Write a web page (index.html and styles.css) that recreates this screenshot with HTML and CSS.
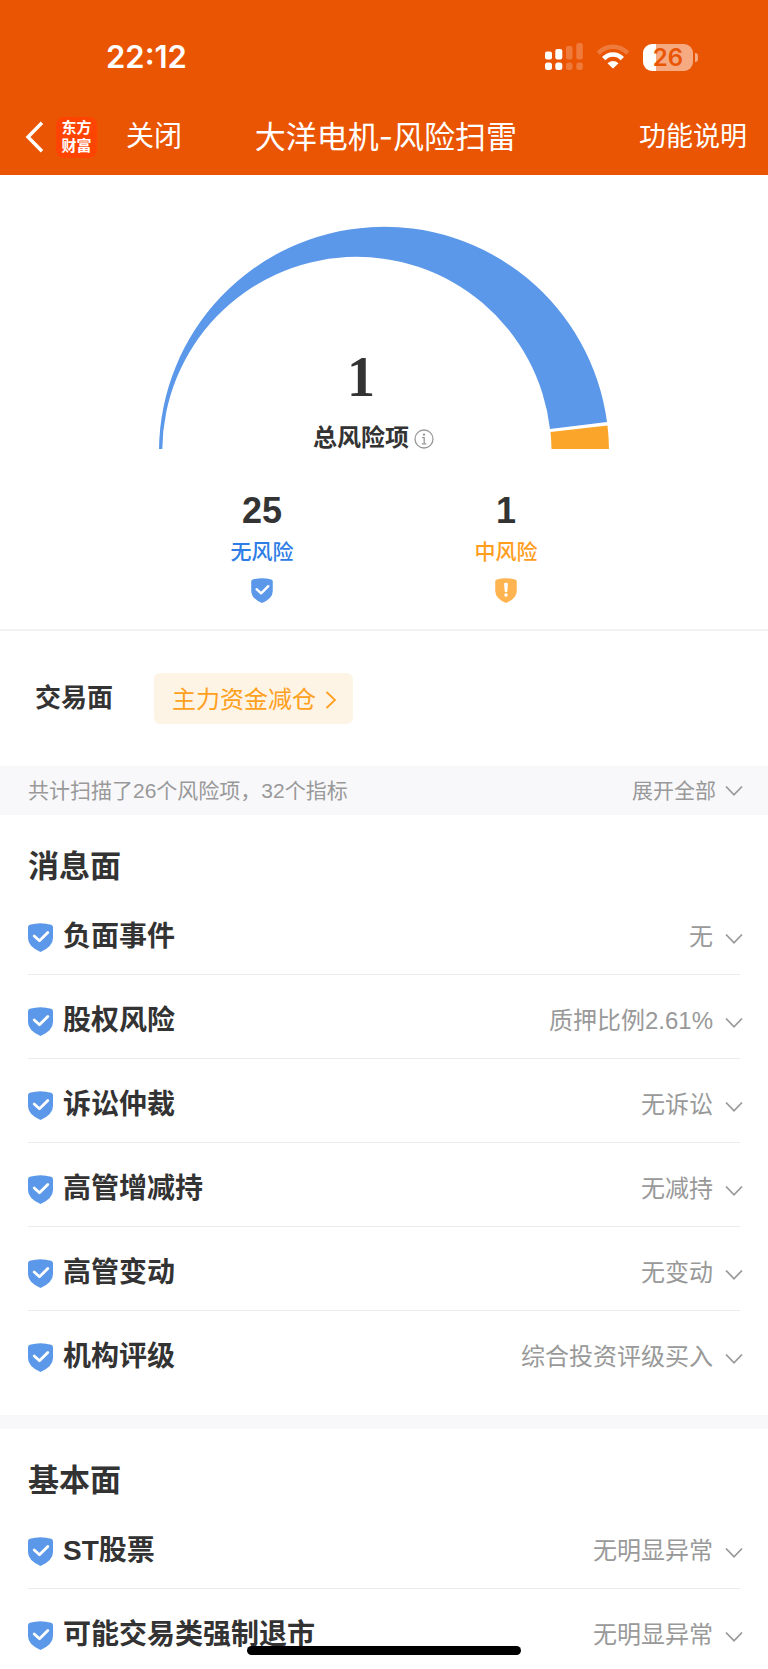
FILE: index.html
```html
<!DOCTYPE html>
<html lang="zh-CN">
<head>
<meta charset="utf-8">
<meta name="viewport" content="width=device-width, initial-scale=1">
<title>大洋电机-风险扫雷</title>
<link rel="stylesheet" href="styles.css">
</head>
<body>
<svg class="defs" width="0" height="0" aria-hidden="true">
  <symbol id="shield-ok" viewBox="0 0 25 29">
    <path fill="#5b98e9" d="M1.800 1.800Q12.500-1.500 23.200 1.800Q25 2.400 25 4.200V15Q25 23.500 12.500 29Q0 23.500 0 15V4.200Q0 2.400 1.800 1.800Z"/>
    <path fill="none" stroke="#fff" stroke-width="2.800" stroke-linecap="round" stroke-linejoin="round" d="M6.200 13L11.500 17.800L19.800 9.500"/>
  </symbol>
  <symbol id="shield-warn" viewBox="0 0 25 29">
    <path fill="#ffb452" d="M1.800 1.800Q12.500-1.500 23.200 1.800Q25 2.400 25 4.200V15Q25 23.500 12.500 29Q0 23.500 0 15V4.200Q0 2.400 1.800 1.800Z"/>
    <path fill="#fff" d="M10.300 7Q10.300 5.500 12.500 5.500T14.700 7L14 15.500Q13.800 16.500 12.500 16.500T11 15.500Z"/>
    <circle cx="12.500" cy="19.800" r="2" fill="#fff"/>
  </symbol>
  <symbol id="chev" viewBox="0 0 18 12">
    <path fill="none" stroke="#999" stroke-width="1.800" d="M1 1.500L9 9.800L17 1.500"/>
  </symbol>
</svg>

<header class="top">
  <div class="status">
    <time class="clock">22:12</time>
    <div class="status-icons">
      <svg width="38" height="28" viewBox="0 0 38 28" fill="#fff" aria-label="信号">
        <rect x="0" y="8.500" width="7" height="8" rx="2"/><rect x="10.300" y="6" width="7" height="10.500" rx="2"/>
        <rect x="0" y="19.500" width="7" height="7.500" rx="2.500"/><rect x="10.300" y="19.500" width="7" height="7.500" rx="2.500"/>
        <g opacity=".22"><rect x="21" y="3" width="6.500" height="13.500" rx="2"/><rect x="31.300" y="0" width="6.500" height="16.500" rx="2"/>
        <rect x="21" y="19.500" width="6.500" height="7.500" rx="2.500"/><rect x="31.300" y="19.500" width="6.500" height="7.500" rx="2.500"/></g>
      </svg>
      <svg width="34" height="28" viewBox="0 0 34 28" aria-label="无线网络">
        <path fill="none" stroke="#fff" stroke-opacity=".22" stroke-width="4.600" d="M2.200 10.200Q8.500 3.800 17 3.800T31.800 10.200"/>
        <path fill="none" stroke="#fff" stroke-width="4.600" d="M7.700 15.600Q11.500 11.500 17 11.500T26.300 15.600"/>
        <path fill="#fff" d="M11.500 20.200Q17 15.600 22.500 20.200L17.700 25Q17 25.500 16.300 25Z"/>
      </svg>
      <span class="battery"><span class="battery-body">26</span><span class="battery-nub"></span></span>
    </div>
  </div>
  <nav class="nav">
    <div class="nav-left">
      <button class="back" type="button" aria-label="返回">
        <svg width="19" height="32" viewBox="0 0 19 32"><path fill="none" stroke="#fff" stroke-width="3.400" d="M17 1.700L3 16L17 30.300"/></svg>
      </button>
      <span class="logo">东方<br>财富</span>
      <button class="nav-link" type="button">关闭</button>
    </div>
    <h1 class="title">大洋电机-风险扫雷</h1>
    <a class="nav-link nav-help" href="#help">功能说明</a>
  </nav>
</header>

<main>
  <section class="summary">
    <div class="gauge">
      <svg class="gauge-arc" width="450" height="223" viewBox="0 0 450 223" aria-hidden="true">
        <path fill="#5b98e9" d="M0 223A225 225 0 0 1 448 196L391 203A194.500 194.500 0 0 0 3.300 223Z"/>
        <path fill="#fba52b" d="M448.500 199.500A225 225 0 0 1 450 223H392.500A194.500 194.500 0 0 0 391.500 206Z"/>
      </svg>
      <div class="gauge-text">
        <strong class="total">1</strong>
        <div class="total-label">总风险项
          <svg class="info" width="20" height="20" viewBox="0 0 20 20" aria-hidden="true">
            <circle cx="10" cy="10" r="9" fill="none" stroke="#999" stroke-width="1.300"/>
            <circle cx="10" cy="5.600" r="1.200" fill="#999"/>
            <path fill="none" stroke="#999" stroke-width="1.300" d="M8 8.700H10.200V14.700M7.800 14.900H12.400"/>
          </svg>
        </div>
      </div>
    </div>
    <div class="stats">
      <div class="stat">
        <strong class="stat-num">25</strong>
        <span class="stat-label safe">无风险</span>
        <svg width="22" height="25"><use href="#shield-ok"/></svg>
      </div>
      <div class="stat">
        <strong class="stat-num">1</strong>
        <span class="stat-label warn">中风险</span>
        <svg width="22" height="25"><use href="#shield-warn"/></svg>
      </div>
    </div>
  </section>

  <section class="trade">
    <h2 class="trade-title">交易面</h2>
    <a class="tag" href="#fund">主力资金减仓
      <svg width="12" height="20" viewBox="0 0 12 20"><path fill="none" stroke="#ffa020" stroke-width="1.800" d="M1.500 2L10 10L1.500 18"/></svg>
    </a>
  </section>

  <div class="scan">
    <span>共计扫描了26个风险项，32个指标</span>
    <button class="expand" type="button">展开全部<svg width="18" height="12"><use href="#chev"/></svg></button>
  </div>

  <section class="group">
    <h2 class="group-title">消息面</h2>
    <ul class="list">
      <li><button class="row" type="button"><svg class="shield" width="25" height="29"><use href="#shield-ok"/></svg><span class="name">负面事件</span><span class="value">无</span><svg class="chev" width="18" height="12"><use href="#chev"/></svg></button></li>
      <li><button class="row" type="button"><svg class="shield" width="25" height="29"><use href="#shield-ok"/></svg><span class="name">股权风险</span><span class="value">质押比例2.61%</span><svg class="chev" width="18" height="12"><use href="#chev"/></svg></button></li>
      <li><button class="row" type="button"><svg class="shield" width="25" height="29"><use href="#shield-ok"/></svg><span class="name">诉讼仲裁</span><span class="value">无诉讼</span><svg class="chev" width="18" height="12"><use href="#chev"/></svg></button></li>
      <li><button class="row" type="button"><svg class="shield" width="25" height="29"><use href="#shield-ok"/></svg><span class="name">高管增减持</span><span class="value">无减持</span><svg class="chev" width="18" height="12"><use href="#chev"/></svg></button></li>
      <li><button class="row" type="button"><svg class="shield" width="25" height="29"><use href="#shield-ok"/></svg><span class="name">高管变动</span><span class="value">无变动</span><svg class="chev" width="18" height="12"><use href="#chev"/></svg></button></li>
      <li><button class="row" type="button"><svg class="shield" width="25" height="29"><use href="#shield-ok"/></svg><span class="name">机构评级</span><span class="value">综合投资评级买入</span><svg class="chev" width="18" height="12"><use href="#chev"/></svg></button></li>
    </ul>
  </section>

  <section class="group">
    <h2 class="group-title">基本面</h2>
    <ul class="list">
      <li><button class="row" type="button"><svg class="shield" width="25" height="29"><use href="#shield-ok"/></svg><span class="name">ST股票</span><span class="value">无明显异常</span><svg class="chev" width="18" height="12"><use href="#chev"/></svg></button></li>
      <li><button class="row" type="button"><svg class="shield" width="25" height="29"><use href="#shield-ok"/></svg><span class="name">可能交易类强制退市</span><span class="value">无明显异常</span><svg class="chev" width="18" height="12"><use href="#chev"/></svg></button></li>
    </ul>
  </section>
</main>
<div class="home-bar"></div>
</body>
</html>
```
FILE: styles.css
```css
* {
  box-sizing: border-box;
}

body {
  margin: 0;
  background: #fff;
  color: #333;
  font-family: "Liberation Sans", "Noto Sans CJK SC", sans-serif;
}

h1, h2, ul {
  margin: 0;
  padding: 0;
}

button {
  padding: 0;
  border: 0;
  background: none;
  color: inherit;
  font: inherit;
  cursor: pointer;
}

a {
  color: inherit;
  text-decoration: none;
}

svg {
  display: block;
  flex: none;
}

.defs {
  position: absolute;
}

/* Header */
.top {
  background: #ea5504;
  color: #fff;
}

.status {
  display: flex;
  justify-content: space-between;
  align-items: center;
  height: 99px;
  padding: 15px 70px 0 106px;
}

.clock {
  font: 600 31px/40px Inter, sans-serif;
}

.status-icons {
  display: flex;
  align-items: center;
  gap: 13px;
}

.battery {
  display: flex;
  align-items: center;
  gap: 2px;
}

.battery-body {
  width: 50px;
  height: 27px;
  border-radius: 9px;
  background: linear-gradient(90deg, #fff 26%, #f5aa82 26%);
  color: #ea5504;
  font: 600 24px/27px Inter, sans-serif;
  text-align: center;
}

.battery-nub {
  width: 3px;
  height: 9px;
  border-radius: 0 4px 4px 0;
  background: #f5aa82;
}

.nav {
  display: grid;
  grid-template-columns: 1fr auto 1fr;
  align-items: center;
  height: 76px;
  padding: 0 21px 0 25px;
}

.nav-left {
  display: flex;
  align-items: center;
}

.logo {
  width: 41px;
  height: 41px;
  margin: 0 29px 0 12px;
  padding-top: 1px;
  border-radius: 8px;
  background: #ff4402;
  font: 700 15px/18px "Noto Sans CJK SC", sans-serif;
  text-align: center;
}

.nav-link {
  font-size: 28px;
  line-height: 40px;
}

.nav-help {
  justify-self: end;
  font-size: 27px;
}

.title {
  font-family: Inter, "Noto Sans CJK SC", sans-serif;
  font-size: 31px;
  font-weight: 400;
  line-height: 40px;
}

/* Gauge */
.summary {
  padding: 51px 0 26px;
  border-bottom: 2px solid #f2f2f2;
}

.gauge {
  display: grid;
  justify-content: center;
}

.gauge-arc,
.gauge-text {
  grid-area: 1 / 1;
}

.gauge-text {
  display: flex;
  flex-direction: column;
  align-items: center;
  align-self: end;
  padding-right: 46px;
}

.total {
  font: 700 56px/60px "Liberation Serif", serif;
}

.total-label {
  position: relative;
  margin-top: 20px;
  font-size: 24px;
  font-weight: 700;
  line-height: 22px;
}

.info {
  position: absolute;
  top: 50%;
  left: 100%;
  margin: -9px 0 0 5px;
}

.stats {
  display: grid;
  grid-template-columns: 244px 244px;
  justify-content: center;
  padding-top: 40px;
}

.stat {
  display: flex;
  flex-direction: column;
  align-items: center;
}

.stat-num {
  font-size: 36px;
  line-height: 44px;
}

.stat-label {
  margin: 3px 0 10px;
  font-size: 21px;
  font-weight: 500;
  line-height: 32px;
}

.safe {
  color: #2e7de6;
}

.warn {
  color: #ff9d1c;
}

/* Trade tags */
.trade {
  display: flex;
  align-items: center;
  gap: 41px;
  padding: 42px 35px;
}

.trade-title {
  padding-bottom: 2px;
  font-size: 26px;
  line-height: 40px;
}

.tag {
  display: flex;
  align-items: center;
  gap: 9px;
  height: 51px;
  padding: 2px 16px 0 18px;
  border-radius: 6px;
  background: #fef4e6;
  color: #ffa020;
  font-size: 24px;
  line-height: 32px;
}

.scan {
  display: flex;
  justify-content: space-between;
  align-items: center;
  height: 49px;
  padding: 0 25px 0 28px;
  background: #f8f8fb;
  color: #999;
  font-size: 21px;
  line-height: 30px;
}

.expand {
  display: flex;
  align-items: center;
  gap: 9px;
}

/* Risk groups */
.group {
  padding-top: 31px;
}

.group + .group {
  border-top: 14px solid #f8f8fb;
  margin-top: 20px;
}

.group-title {
  padding: 0 28px;
  font-size: 31px;
  line-height: 42px;
}

.list {
  padding: 3px 28px 0;
  list-style: none;
}

.list li {
  border-bottom: 1px solid #ebebeb;
}

.list li:last-child {
  border-bottom-color: transparent;
}

.row {
  display: flex;
  align-items: center;
  width: 100%;
  padding: 29px 0 20px;
  text-align: left;
}

.name {
  flex: 1;
  margin-left: 10px;
  font-size: 28px;
  font-weight: 700;
  line-height: 34px;
}

.value {
  color: #999;
  font-size: 24px;
  line-height: 34px;
}

.chev {
  margin: 4px -3px 0 12px;
}

.group:last-child li:last-child .row {
  padding-bottom: 16px;
}

.home-bar {
  position: fixed;
  bottom: 14px;
  left: 50%;
  width: 274px;
  height: 9px;
  margin-left: -137px;
  border-radius: 5px;
  background: #000;
}
```
